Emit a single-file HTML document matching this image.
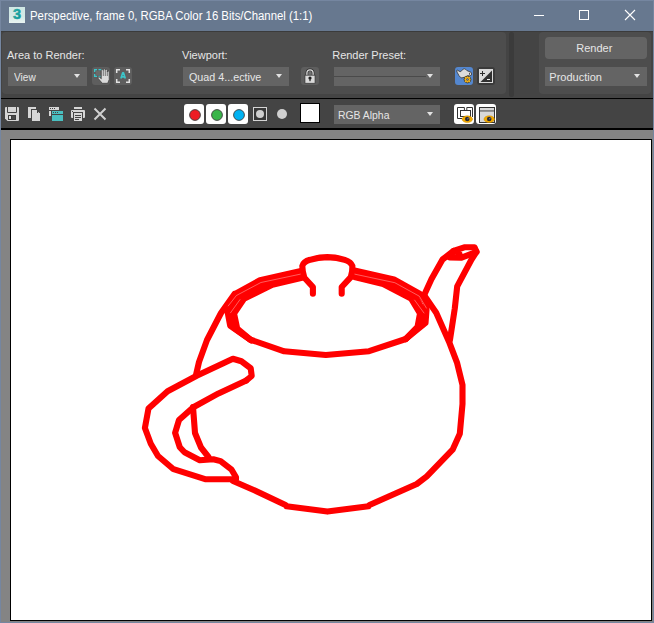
<!DOCTYPE html>
<html><head><meta charset="utf-8">
<style>
html,body{margin:0;padding:0;}
body{width:654px;height:623px;overflow:hidden;background:#7586a0;position:relative;font-family:"Liberation Sans",sans-serif;font-size:11px;color:#e6e6e6;}
.abs{position:absolute;}
#title{left:1px;top:1px;width:652px;height:30px;background:#67788f;}
#content{left:1px;top:31px;width:652px;height:591px;background:#444;}
.grp{position:absolute;background:#4d4d4d;border-radius:4px;}
.dd{position:absolute;background:#646464;height:19px;}
.btn{position:absolute;width:18px;height:18px;border-radius:3px;background:#5e5e5e;}
.wbtn{position:absolute;width:20px;height:20px;border-radius:3px;background:#fff;top:104px;}
.lbl{position:absolute;white-space:nowrap;line-height:13px;transform-origin:0 0;}
.tri{position:absolute;width:0;height:0;border-left:3.5px solid transparent;border-right:3.5px solid transparent;border-top:4px solid #e2e2e2;}
#gray{left:1px;top:130px;width:652px;height:492px;background:#848484;}
#img{left:10px;top:139px;width:640px;height:480px;background:#fff;border:1px solid #000;}
svg{position:absolute;left:0;top:0;overflow:visible;}
</style></head><body>
<div id="title" class="abs"></div>
<div id="content" class="abs"></div>
<!-- groups -->
<div class="grp" style="left:2px;top:32px;width:504px;height:62px;"></div>
<div class="abs" style="left:509.3px;top:31.5px;width:5.2px;height:65px;background:#3b3b3b;border-radius:2.5px;"></div>
<div class="grp" style="left:539px;top:32px;width:112px;height:62px;"></div>
<div class="abs" style="left:1px;top:31px;width:652px;height:1px;background:#3b3b3b;"></div>
<div class="abs" style="left:1px;top:98px;width:652px;height:1px;background:#000;"></div>
<div class="abs" style="left:1px;top:128px;width:652px;height:2px;background:#000;"></div>
<div id="gray" class="abs"></div>
<div id="img" class="abs"></div>

<!-- title -->
<div class="lbl" id="t0" style="transform:scaleX(0.947);left:30px;top:10px;font-size:12px;color:#fff;">Perspective, frame 0, RGBA Color 16 Bits/Channel (1:1)</div>

<!-- row 1 -->
<div class="lbl" id="t1" style="left:7px;top:49px;">Area to Render:</div>
<div class="dd" style="left:8px;top:67px;width:79px;"></div>
<div class="lbl" id="t2" style="transform:scaleX(0.92);left:13.5px;top:71px;">View</div>
<div class="tri" style="left:74px;top:74px;"></div>
<div class="btn" style="left:92px;top:67px;"></div>
<div class="btn" style="left:114px;top:67px;"></div>

<div class="lbl" id="t3" style="left:182px;top:49px;">Viewport:</div>
<div class="dd" style="left:183px;top:67px;width:106px;"></div>
<div class="lbl" id="t4" style="transform:scaleX(0.977);left:189px;top:71px;">Quad 4...ective</div>
<div class="tri" style="left:276px;top:74px;"></div>
<div class="btn" style="left:301px;top:67px;"></div>

<div class="lbl" id="t5" style="left:332.2px;top:49px;">Render Preset:</div>
<div class="dd" style="left:334px;top:67px;width:106px;"></div>
<div class="abs" style="left:334px;top:76px;width:92px;height:1px;background:#4a4a4a;"></div>
<div class="tri" style="left:427px;top:74px;"></div>
<div class="btn" style="left:455px;top:67px;background:#5487cf;"></div>
<div class="btn" style="left:477px;top:67px;background:#3a3a3a;"></div>

<div class="dd" style="left:545px;top:37px;width:102px;height:22px;border-radius:4px;"></div>
<div class="lbl" id="t6" style="left:576.3px;top:42px;">Render</div>
<div class="dd" style="left:545px;top:67px;width:102px;"></div>
<div class="lbl" id="t7" style="left:549.3px;top:71px;">Production</div>
<div class="tri" style="left:634px;top:74px;"></div>

<!-- toolbar -->
<div class="wbtn" style="left:184px;"></div>
<div class="wbtn" style="left:206px;"></div>
<div class="wbtn" style="left:228px;"></div>
<div class="abs" style="left:300px;top:103px;width:18px;height:18px;background:#fff;border:1px solid #000;"></div>
<div class="dd" style="left:334px;top:105px;width:106px;"></div>
<div class="lbl" id="t8" style="transform:scaleX(0.945);left:338.3px;top:109px;">RGB Alpha</div>
<div class="tri" style="left:427px;top:112px;"></div>
<div class="wbtn" style="left:454px;"></div>
<div class="wbtn" style="left:476px;"></div>

<svg id="icons" width="654" height="623" viewBox="0 0 654 623">
<!-- window controls -->
<rect x="534" y="15" width="10" height="1" fill="#fff"/>
<rect x="579.5" y="10.5" width="9" height="9" fill="none" stroke="#fff" stroke-width="1"/>
<path d="M625,10 L635,20 M635,10 L625,20" stroke="#fff" stroke-width="1.1" fill="none"/>
<!-- app icon -->
<defs><linearGradient id="ig" x1="0" y1="0" x2="0" y2="1"><stop offset="0" stop-color="#cfe7e4"/><stop offset="0.6" stop-color="#d3e9e6"/><stop offset="1" stop-color="#e9f4f2"/></linearGradient>
<linearGradient id="tg" x1="0" y1="0" x2="1" y2="1"><stop offset="0" stop-color="#35b5b0"/><stop offset="1" stop-color="#0a8f92"/></linearGradient></defs>
<rect x="9" y="7" width="16" height="16" fill="url(#ig)"/>
<text x="13" y="18.6" font-family="Liberation Sans" font-weight="bold" font-size="14.5" fill="url(#tg)" stroke="#1aa3a0" stroke-width="0.5">3</text>

<!-- save icon 5..19 x 107..121 -->
<g>
<path d="M6,107 H18 Q19,107 19,108 V120 Q19,121 18,121 H7.5 L5,118.5 V108 Q5,107 6,107 Z" fill="#d6d6d6"/>
<path d="M7.5,107 V112.5 H16.5 V107" fill="none" stroke="#444" stroke-width="1"/>
<rect x="8" y="115" width="8" height="5" fill="#3e3e3e"/>
<rect x="9" y="116" width="2" height="3" fill="#e0e0e0"/>
<rect x="12" y="116" width="3" height="3" fill="#4a4a4a"/>
</g>
<!-- copy icon -->
<g>
<path d="M28,107 H36 V118 H28 Z" fill="#d6d6d6"/>
<path d="M31,109 H38 V112 H41 V122 H31 Z" fill="#444"/>
<path d="M32,110 H37 V113 H40 V121 H32 Z" fill="#d6d6d6"/>
<rect x="38" y="112" width="1" height="1" fill="#bdbdbd"/>
</g>
<!-- clone window icon -->
<g>
<rect x="49" y="107" width="10" height="3" fill="#d6d6d6"/>
<rect x="50" y="108" width="1" height="1" fill="#444"/><rect x="52" y="108" width="1" height="1" fill="#444"/><rect x="54" y="108" width="1" height="1" fill="#444"/>
<rect x="49" y="111" width="2" height="5" fill="#d6d6d6"/>
<rect x="52" y="111" width="11" height="3" fill="#49bfc0"/>
<rect x="53" y="112" width="1" height="1" fill="#444"/><rect x="55" y="112" width="1" height="1" fill="#444"/><rect x="57" y="112" width="1" height="1" fill="#444"/>
<rect x="52" y="115" width="11" height="6" fill="#49bfc0"/>
</g>
<!-- printer icon -->
<g>
<rect x="74" y="107" width="8" height="2" fill="#d6d6d6"/>
<path d="M72,110 H84 Q85,110 85,111 V117 Q85,118 84,118 H72 Q71,118 71,117 V111 Q71,110 72,110 Z" fill="#d6d6d6"/>
<rect x="72" y="111" width="1" height="1" fill="#444"/>
<rect x="73.5" y="112.5" width="9" height="9" fill="#d6d6d6" stroke="#444" stroke-width="1"/>
<rect x="75" y="115" width="6" height="1" fill="#444"/>
<rect x="75" y="117" width="6" height="1" fill="#444"/>
<rect x="75" y="119" width="4" height="1" fill="#444"/>
</g>
<!-- X icon -->
<path d="M94.5,108.5 L105.5,119.5 M105.5,108.5 L94.5,119.5" stroke="#d0d0d0" stroke-width="2" fill="none"/>

<!-- region/hand icon -->
<g>
<g fill="#3cc6ca">
<rect x="94" y="69" width="3" height="1.3"/><rect x="94" y="69" width="1.3" height="3"/>
<rect x="98.5" y="69" width="3" height="1.3"/>
<rect x="94" y="74" width="1.3" height="3"/><rect x="94" y="75.7" width="3" height="1.3"/>
<rect x="98.5" y="75.7" width="2" height="1.3"/>
</g>
<rect x="96" y="71" width="4.5" height="4.5" fill="#6a6a6a"/>
<path d="M101.3,77.5 V70.5 Q101.3,69.3 102.3,69.3 Q103.3,69.3 103.3,70.5 V69.8 Q103.3,68.8 104.3,68.8 Q105.3,68.8 105.3,69.8 V70.3 Q105.3,69.3 106.3,69.3 Q107.3,69.3 107.3,70.5 V72 Q107.3,71 108.2,71 Q109.2,71 109.2,72 V79.5 L107.7,83.3 H102.3 L97.8,78 Q98.3,76.6 99.6,77.2 L101.3,78.8 Z" fill="#dadada" stroke="#3a3a3a" stroke-width="0.7"/>
<path d="M103.3,70.5 V76 M105.3,70.5 V76 M107.3,71.5 V76" stroke="#4a4a4a" stroke-width="0.7" fill="none"/>
</g>
<!-- auto region icon -->
<g fill="none" stroke="#e2e2e2" stroke-width="1.5">
<path d="M116.7,73 V69.7 H120"/><path d="M126,69.7 H129.3 V73"/>
<path d="M116.7,79 V82.3 H120"/><path d="M126,82.3 H129.3 V79"/>
</g>
<path d="M120.9,78.6 L122.6,72.9 H123.6 L125.3,78.6 M121.6,76.9 H124.6" fill="none" stroke="#3cc6ca" stroke-width="1.6" stroke-linejoin="round"/>
<!-- lock -->
<g>
<path d="M306.9,75.5 V73 Q306.9,69.8 310,69.8 Q313.1,69.8 313.1,73 V75.5" fill="#727272" stroke="#2a2a2a" stroke-width="2.6"/>
<path d="M306.9,75.5 V73 Q306.9,69.8 310,69.8 Q313.1,69.8 313.1,73 V75.5" fill="none" stroke="#dcdcdc" stroke-width="1.3"/>
<rect x="305" y="75.2" width="10" height="8" fill="#dadada" stroke="#2e2e2e" stroke-width="0.6"/>
<circle cx="310" cy="78" r="1.6" fill="#1e1e1e"/>
<rect x="309.4" y="78" width="1.2" height="3.2" fill="#1e1e1e"/>
</g>
<!-- teapot gear -->
<g>
<path d="M456.6,70.6 L457.4,70.2 L460.2,71.7 L461.6,70.7 L463.1,69.3 Q464.3,68.3 465.6,69.3 L466.8,70.5 L469.1,71.5 Q471.7,71.8 471.7,74 Q471.5,75.9 469.5,75.9 L468,75.7 L465,77.1 L461.8,77.9 L460.8,77.6 L459,75.7 L457.2,72.3 Z" fill="#dcdcdc" stroke="#333" stroke-width="0.8" stroke-linejoin="round"/>
<ellipse cx="469.6" cy="73.8" rx="0.55" ry="1.1" fill="#444"/>
<g transform="translate(467.5,79.5) scale(0.83)">
<path d="M-0.9,-4.2 H0.9 L1.2,-3 L2.3,-3.6 L3.6,-2.3 L3,-1.2 L4.2,-0.9 V0.9 L3,1.2 L3.6,2.3 L2.3,3.6 L1.2,3 L0.9,4.2 H-0.9 L-1.2,3 L-2.3,3.6 L-3.6,2.3 L-3,1.2 L-4.2,0.9 V-0.9 L-3,-1.2 L-3.6,-2.3 L-2.3,-3.6 L-1.2,-3 Z" fill="#fbb81c" stroke="#3a3320" stroke-width="0.8"/>
<circle r="1.25" fill="#4f84cf" stroke="#3a3320" stroke-width="0.6"/>
</g>
</g>
<!-- exposure -->
<g>
<rect x="479.5" y="69.5" width="13" height="13" fill="#dadada" stroke="#dadada" stroke-width="1"/>
<path d="M492,70.5 V82 H480.5 Z" fill="#303030"/>
<rect x="480" y="73" width="5" height="1" fill="#2a2a2a"/><rect x="482" y="71" width="1" height="5" fill="#2a2a2a"/>
<rect x="487" y="79" width="3" height="1" fill="#f0f0f0"/>
</g>
<!-- view buttons with eye -->
<g>
<path d="M457.5,118.5 V107.5 H464.4 V110 M466.8,110 V107.5 H472.5 V117 M457.5,118.5 H462" fill="none" stroke="#333" stroke-width="1"/>
<rect x="460.5" y="110.5" width="10" height="6" fill="#fff" stroke="#333" stroke-width="1"/>
<ellipse cx="467.3" cy="119.2" rx="5.2" ry="3.4" fill="#f2a900" stroke="#c88a00" stroke-width="0.5"/>
<circle cx="467.3" cy="119" r="2.3" fill="#2b2b33"/>
<path d="M467.3,119 L468.8,117.8" stroke="#d8d8d8" stroke-width="0.6"/>
</g>
<g>
<rect x="479.5" y="107.5" width="15" height="15" fill="#d8d8d8" stroke="#333" stroke-width="1"/>
<rect x="479" y="110.5" width="16" height="0.9" fill="#333"/>
<ellipse cx="489.2" cy="119.2" rx="5.2" ry="3.4" fill="#f2a900" stroke="#c88a00" stroke-width="0.5"/>
<circle cx="489.2" cy="119" r="2.3" fill="#2b2b33"/>
<path d="M489.2,119 L490.7,117.8" stroke="#d8d8d8" stroke-width="0.6"/>
</g>
<!-- channel circles -->
<circle cx="195" cy="115" r="5.4" fill="#ed1c24" stroke="#3c3c3c" stroke-width="0.9"/>
<circle cx="217" cy="115" r="5.4" fill="#39b54a" stroke="#3c3c3c" stroke-width="0.9"/>
<circle cx="239" cy="115" r="5.4" fill="#00b2f2" stroke="#3c3c3c" stroke-width="0.9"/>
<rect x="253.5" y="107.5" width="13" height="13" fill="#383838" stroke="#d4d4d4" stroke-width="1"/>
<circle cx="260" cy="114" r="4" fill="#d0d0d0"/>
<circle cx="282" cy="114" r="5" fill="#d0d0d0"/>
</svg>

<svg id="teapot" width="654" height="623" viewBox="0 0 654 623" fill="none" stroke="#ff0000" stroke-width="6.1" stroke-linejoin="round" stroke-linecap="round">
<!-- knob -->
<path d="M312.9,293.8 L312.9,287 L304.4,277.8 Q302.3,271 302.3,266 Q303.5,261.5 310,259.8 Q318,257.3 327.3,257.1 Q337,257.3 344.7,259.8 Q351,261.8 352.4,266 Q352.6,271 350.8,277.2 L341.7,287 L341.7,293.8"/>
<!-- rim outer -->
<path d="M302,270.8 L260,280.2 L235.2,293.8 L227.4,311 L230.2,325.8 L250,339.5 L284.2,351.3 L325.8,355 L369.1,351.2 L405.8,339 L425.5,323 L426.5,310 L426,303 L420,293.8 L394,279.5 L354.5,270.5"/>
<!-- rim inner -->
<path d="M302,277.8 L272.3,284.8 L244,298.8 L234,313.5 L237.2,328.6 L251.3,340.4 M354.5,277 L383.2,284 L411,298.5 L420,313.5 L417.5,327 L405.8,339"/>
<path d="M302,274.5 L266,282 L239.5,296 L230.5,312 L233.5,327.5 L250,339.5 M354.5,274 L388,281.5 L415,296 L423,311 L421,325 L405.8,339"/>
<!-- body left -->
<path d="M234.5,294 L221,313 L207,340 L199,362 L196,375 M193,407 L195,433 L201,447.5 L208.5,457"/>
<!-- handle -->
<path d="M246.3,380.4 L251.7,376 L250.7,368.2 L241.4,361.3 L232.9,358.8 L196.7,375.8 L167.6,391.2 L148.5,408.5 L144.9,428 L150.8,443.8 L158,456 L173.5,469.2 L205.9,479.3 L235.3,479.3"/>
<path d="M246.3,380.4 L218.5,393.4 L193.3,407.2 L179,420 L175.1,432.8 L179.8,447.2 L184.5,452.3 L199.8,460.2 L213.3,459.2 L220.6,461.1 L231.6,469.7 L236,477.3 L236,479.3 M233,481 L254.9,490.5 L285.5,505 M286.5,506.3 L327.4,511.6 L368.5,506.3 M369.5,505 L416.8,484 L426.8,476.3 L452.6,449.7 L459.8,433.8 L462.5,404 L462.5,385 L457,362.6 L449,341.7 L436.2,312.8 L424,295"/>
<!-- spout -->
<path d="M424.2,294.9 L431.5,279 L442.5,259.5 L453.5,251 L465,247.2 L474.5,247.2 L476.5,251.8 L471.5,259.5 L457.2,286.4 L454.8,308.4 L449.9,340.2"/>
<path d="M453.5,251 L449.5,257.5 L460.9,257.8 L470.7,254.1 L476.5,251.8"/>
<path d="M453.5,252.5 L460.5,253.8" stroke-width="4"/>
<g stroke="#ffd0d0" stroke-width="0.45" stroke-linecap="butt"><path d="M300.6,274.1 L260.9,282.5 L236.4,295.5 L228,306.2"/><path d="M240.2,299.3 L230.3,313.1"/><path d="M354.5,274.1 L394.8,282.7 L419.3,296.2 L426.6,308.4"/><path d="M414.4,299.8 L424.2,313.3"/></g>
</svg>
</body></html>
